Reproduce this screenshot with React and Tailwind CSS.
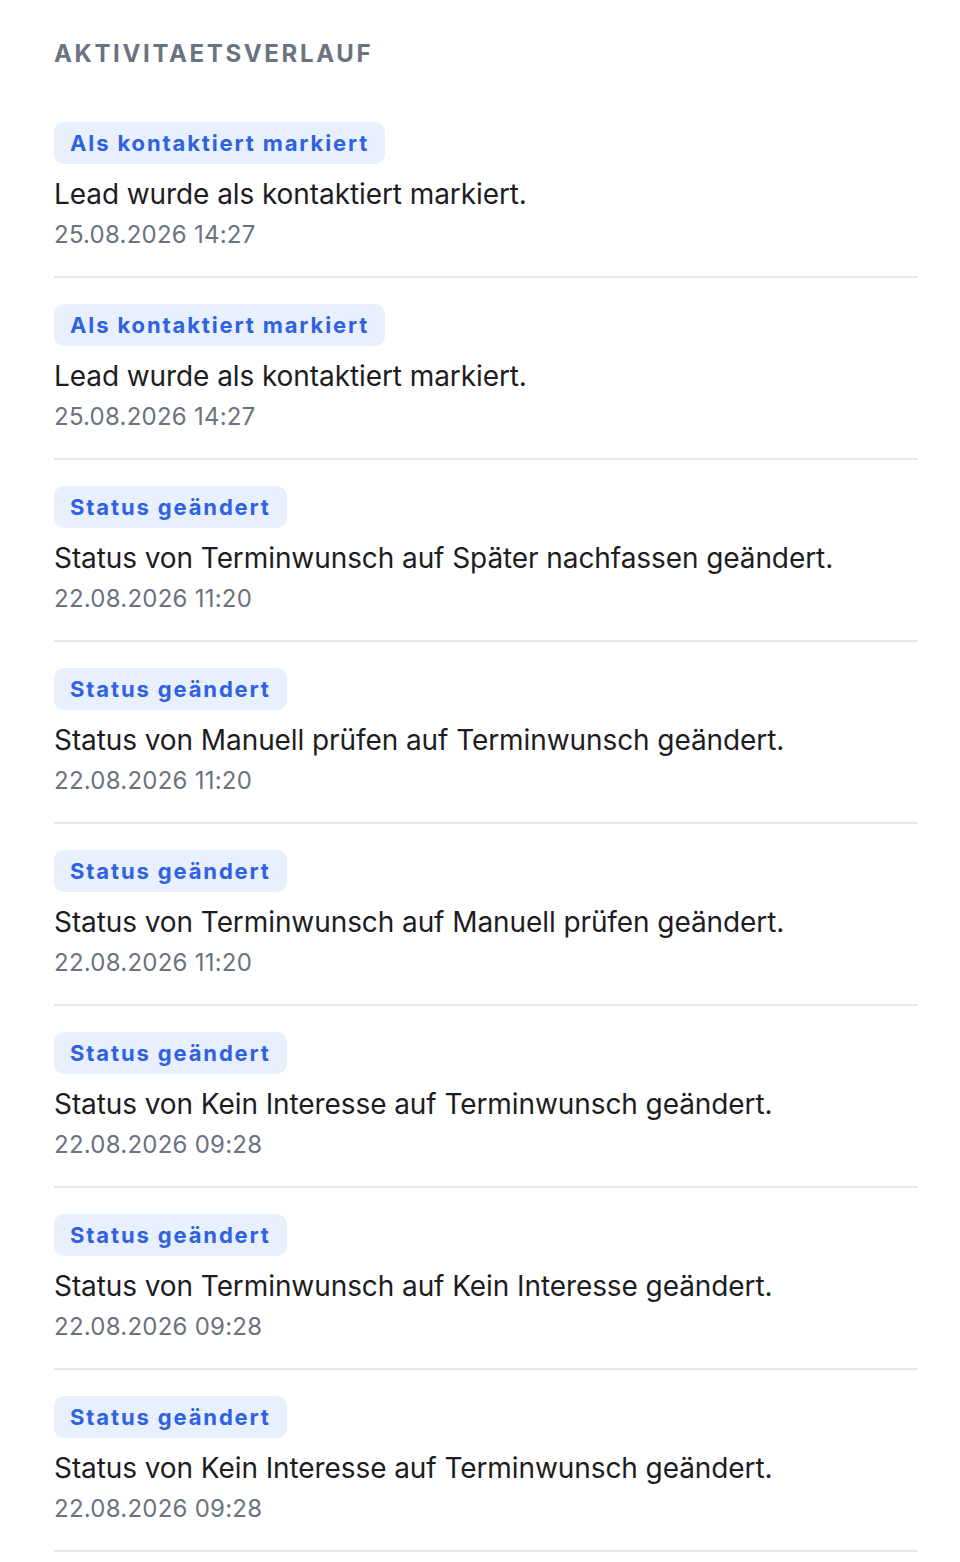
import React from "react";

const activities = [
  {
    type: "Als kontaktiert markiert",
    text: "Lead wurde als kontaktiert markiert.",
    date: "25.08.2026 14:27",
  },
  {
    type: "Als kontaktiert markiert",
    text: "Lead wurde als kontaktiert markiert.",
    date: "25.08.2026 14:27",
  },
  {
    type: "Status geändert",
    text: "Status von Terminwunsch auf Später nachfassen geändert.",
    date: "22.08.2026 11:20",
  },
  {
    type: "Status geändert",
    text: "Status von Manuell prüfen auf Terminwunsch geändert.",
    date: "22.08.2026 11:20",
  },
  {
    type: "Status geändert",
    text: "Status von Terminwunsch auf Manuell prüfen geändert.",
    date: "22.08.2026 11:20",
  },
  {
    type: "Status geändert",
    text: "Status von Kein Interesse auf Terminwunsch geändert.",
    date: "22.08.2026 09:28",
  },
  {
    type: "Status geändert",
    text: "Status von Terminwunsch auf Kein Interesse geändert.",
    date: "22.08.2026 09:28",
  },
  {
    type: "Status geändert",
    text: "Status von Kein Interesse auf Terminwunsch geändert.",
    date: "22.08.2026 09:28",
  },
];

const App = () => {
  return (
    <div className="min-h-screen bg-white font-['Inter','Noto_Sans',sans-serif]">
      <section className="pl-[54px] pr-[42px] pt-[38px]">
        {/* Heading */}
        <h2 className="text-[24px] leading-[32px] font-bold uppercase tracking-[0.11em] text-[#6b7280]">
          Aktivitaetsverlauf
        </h2>

        {/* Activity list */}
        <ul className="mt-[26px]">
          {activities.map((item, i) => (
            <li
              key={i}
              className="pt-[26px] pb-[25px] border-b-2 border-[#e5e7eb]"
            >
              <span className="inline-flex items-center h-[42px] px-[16px] rounded-[10px] bg-[#e8effd] text-[#2f62e0] text-[22px] font-bold tracking-[0.085em]">
                {item.type}
              </span>
              <p className="mt-[10px] text-[28px] leading-[40px] tracking-[-0.003em] text-[#1d1d1f]">
                {item.text}
              </p>
              <p className="mt-[5px] text-[24px] leading-[32px] tracking-[0.01em] text-[#6b7280]">
                {item.date}
              </p>
            </li>
          ))}
        </ul>
      </section>
    </div>
  );
};

export default App;
